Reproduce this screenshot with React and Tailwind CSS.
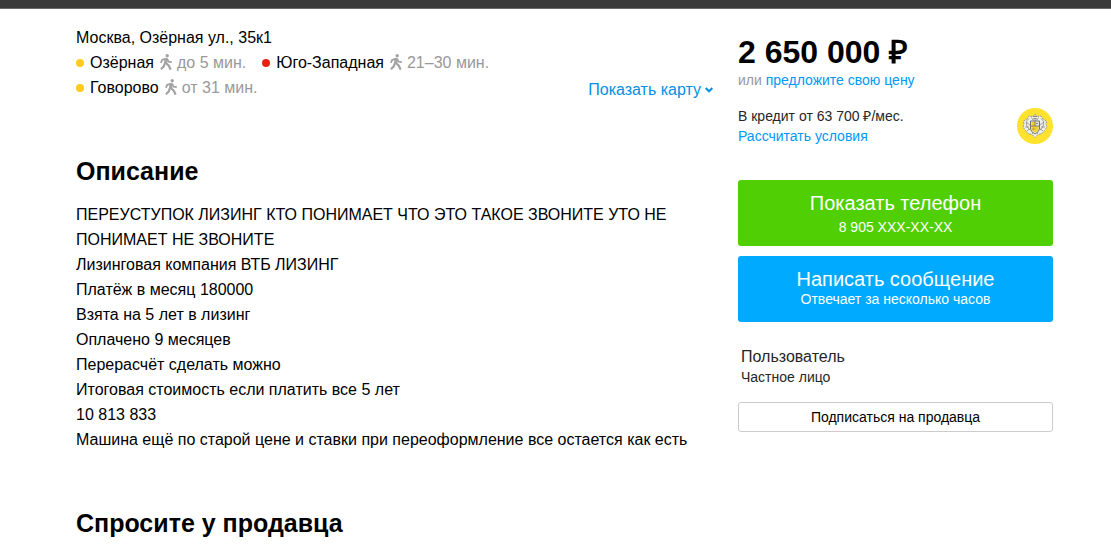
import React from "react";

const stations = [
  { name: "Озёрная", time: "до 5 мин.", color: "bg-[#ffcb1f]" },
  { name: "Юго-Западная", time: "21–30 мин.", color: "bg-[#e42313]" },
  { name: "Говорово", time: "от 31 мин.", color: "bg-[#ffcb1f]" },
];

const description = [
  "ПЕРЕУСТУПОК ЛИЗИНГ КТО ПОНИМАЕТ ЧТО ЭТО ТАКОЕ ЗВОНИТЕ УТО НЕ ПОНИМАЕТ НЕ ЗВОНИТЕ",
  "Лизинговая компания ВТБ ЛИЗИНГ",
  "Платёж в месяц 180000",
  "Взята на 5 лет в лизинг",
  "Оплачено 9 месяцев",
  "Перерасчёт сделать можно",
  "Итоговая стоимость если платить все 5 лет",
  "10 813 833",
  "Машина ещё по старой цене и ставки при переоформление все остается как есть",
];

const WalkIcon = () => (
  <svg className="w-3 h-4 mb-0.5 shrink-0" viewBox="0 0 12 16" fill="none" stroke="#a3a3a3" aria-hidden="true">
    <circle cx="7.2" cy="1.8" r="1.7" fill="#a3a3a3" stroke="none" />
    <path d="M6.2 4 5.500 10" strokeWidth="3.2" />
    <path d="M6 4.800 2.200 5.800 0.900 8.800" strokeWidth="1.8" />
    <path d="M7.2 5 8.600 7.600 11.800 8.200" strokeWidth="1.800" />
    <path d="M5.800 9 8.800 11.600 10.600 15.800" strokeWidth="2.200" />
    <path d="M4.800 9.400 3.800 12.400 0.900 15.200" strokeWidth="2.200" />
  </svg>
);

const BankLogo = () => (
  <svg className="w-9 h-9 shrink-0" viewBox="0 0 36 36" role="img" aria-label="Банк">
    <circle cx="18" cy="18" r="18" fill="#ffe22d" />
    <path
      d="M18 6.5 20.5 8.5 24 8 26 11 29.5 13 29 16.5 30 19 27.5 22.5 25 25.5 21 26.5 18 29.5 15 26.5 11 25.5 8.5 22.5 6 19 7 16.5 6.5 13 10 11 12 8 15.5 8.5Z"
      fill="#f0efea"
      stroke="#9a9a94"
      strokeWidth="1"
      strokeDasharray="2 1"
    />
    <g fill="none" stroke="#8d8d88" strokeWidth="0.8">
      <path d="M12 10.5Q8 13 9.5 17T13 22M24 10.5Q28 13 26.5 17T23 22" />
      <path d="M9 14 13 17M8 19 12 19M10 23 14 20M27 14 23 17M28 19 24 19M26 23 22 20" />
      <path d="M14.5 9.5 16 12 20 12 21.5 9.5M15 26 16.5 24.5M21 26 19.5 24.5" />
    </g>
    <path d="M13.5 13H22.5V21Q22 24 18 26 14 24 13.5 21Z" fill="#e8e6dc" stroke="#77776f" strokeWidth="1" />
    <path d="M14.5 14H18V18H14.5ZM14.5 18H21.5V21Q21 23 18 24.5 15 23 14.5 21Z" fill="#f2cf2c" />
    <path d="M16 8.5H20M16.5 10.5H19.5M14 18H22M18 13V18M15.5 21H17.5M19 15.5H21" stroke="#77776f" strokeWidth="0.9" />
  </svg>
);

const App = () => {
  return (
    <div className="bg-white text-black font-['Liberation_Sans',Arial,sans-serif]">
      <div className="h-[9px] bg-[#3b3b3b] border-b border-[#6b6b6b]" />
      <div className="flex items-start gap-[25px] pl-[76px] pr-[58px]">
        <main className="flex-1 min-w-0 pt-4 text-base leading-[25px]">
          <div className="flex items-end justify-between">
            <div>
              <p>Москва, Озёрная ул., 35к1</p>
              <ul className="flex flex-wrap gap-x-4 max-w-[420px]">
                {stations.map((item) => (
                  <li className="flex items-center whitespace-nowrap" key={item.name}>
                    <span className={`w-2 h-2 mt-px mr-[6px] rounded-full ${item.color}`} />
                    {item.name}
                    <span className="flex items-center gap-[5px] ml-[6px] text-[#999999]">
                      <WalkIcon />
                      {item.time}
                    </span>
                  </li>
                ))}
              </ul>
            </div>
            <button className="flex items-center gap-1 whitespace-nowrap leading-[21px] text-[#0091e6]">
              Показать карту
              <svg className="w-2 h-2" viewBox="0 0 8 8" fill="none" stroke="currentColor" strokeWidth="2" aria-hidden="true">
                <path d="M0.7 2 4 5.3 7.3 2" />
              </svg>
            </button>
          </div>

          <section className="mt-14">
            <h2 className="text-[25px] leading-[30px] font-bold">Описание</h2>
            <div className="mt-4">
              {description.map((line) => (
                <p key={line}>{line}</p>
              ))}
            </div>
          </section>

          <section className="mt-14">
            <h2 className="text-[25px] leading-[30px] font-bold">Спросите у продавца</h2>
          </section>
        </main>

        <aside className="w-[315px] shrink-0 pt-[25px] text-sm leading-5">
          <p className="text-[32px] leading-9 font-bold">2 650 000 ₽</p>
          <p className="text-[#999999]">
            или <a href="#offer" className="text-[#0099f7]">предложите свою цену</a>
          </p>

          <div className="mt-4 flex items-center justify-between text-[#262626]">
            <div>
              <p>В кредит от 63 700 ₽/мес.</p>
              <a href="#credit" className="block text-[#0099f7]">Рассчитать условия</a>
            </div>
            <BankLogo />
          </div>

          <button className="mt-[34px] block w-full h-[66px] rounded-[3px] bg-[#51cf05] text-white">
            <span className="block text-xl leading-7">Показать телефон</span>
            <span className="block">8 905 XXX-XX-XX</span>
          </button>
          <button className="mt-[10px] block w-full h-[66px] rounded-[3px] bg-[#00aaff] text-white">
            <span className="block text-xl leading-5">Написать сообщение</span>
            <span className="block">Отвечает за несколько часов</span>
          </button>

          <div className="mt-[25px] pl-[3px] text-[#262626]">
            <p className="text-base leading-5">Пользователь</p>
            <p>Частное лицо</p>
          </div>
          <button className="mt-[15px] block w-full h-[30px] border border-[#cccccc] rounded-[3px]">
            Подписаться на продавца
          </button>
        </aside>
      </div>
    </div>
  );
};

export default App;
